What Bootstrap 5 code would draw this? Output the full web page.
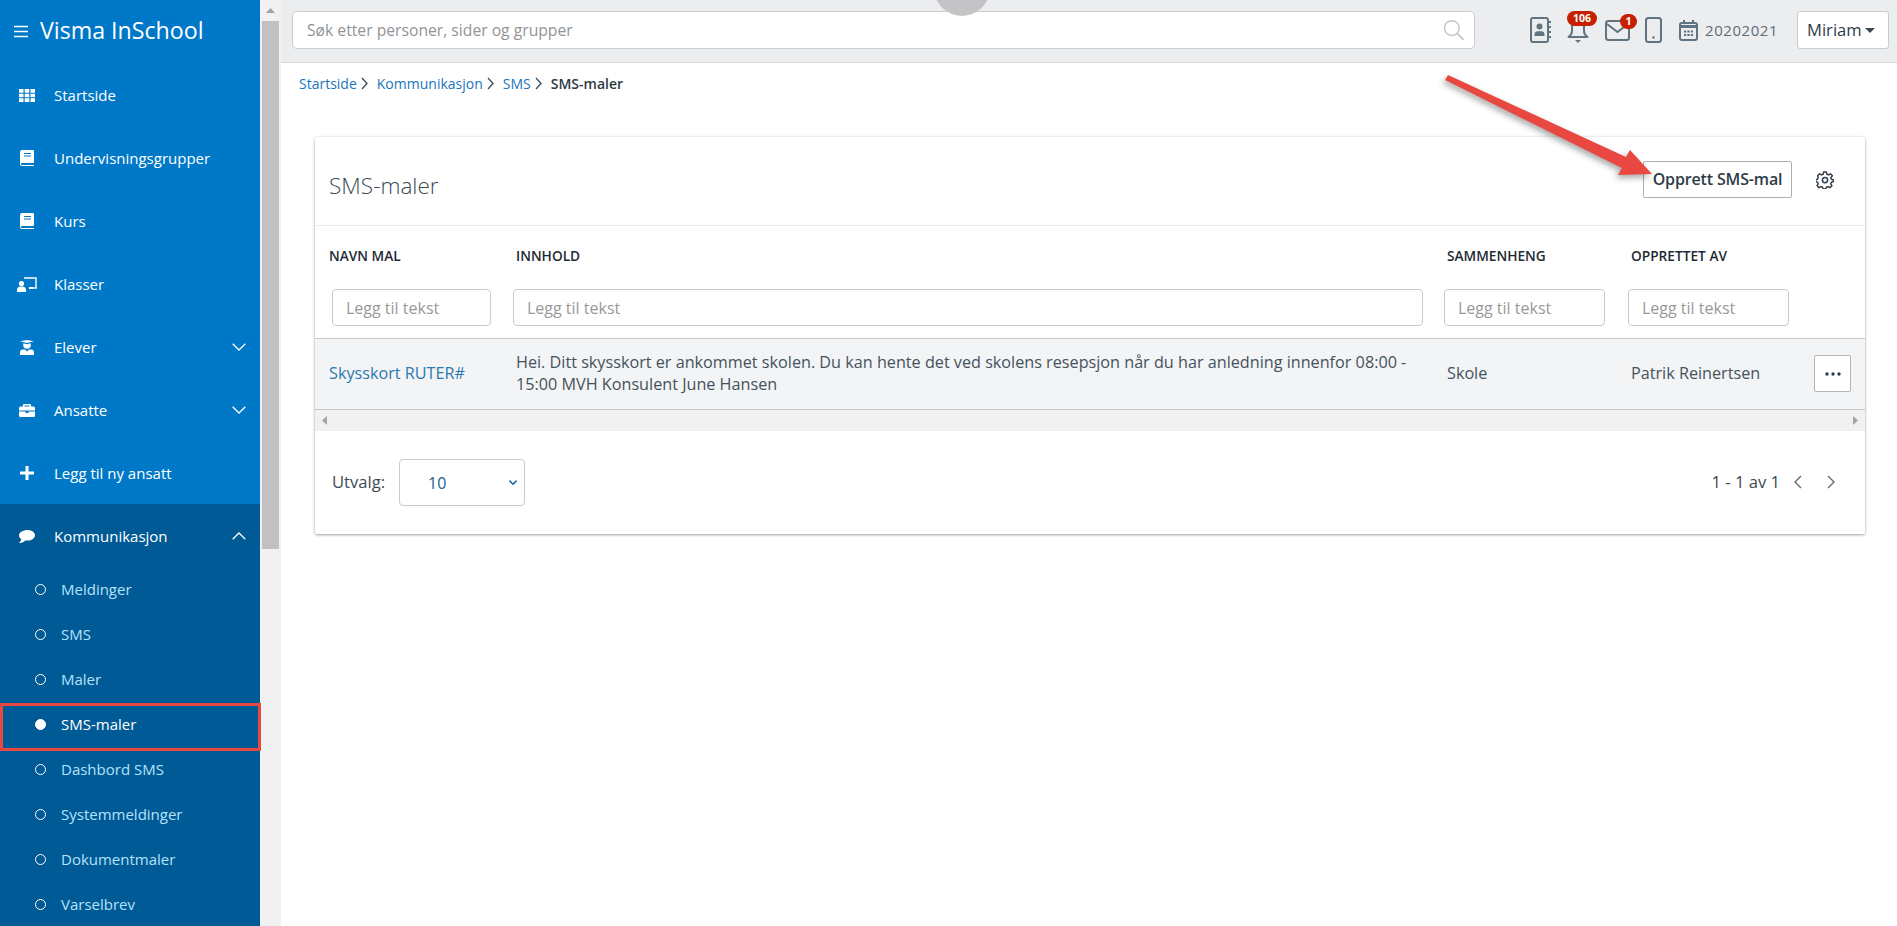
<!DOCTYPE html>
<html lang="nb">
<head>
<meta charset="utf-8">
<title>SMS-maler</title>
<link href="https://cdn.jsdelivr.net/npm/bootstrap@5.3.0/dist/css/bootstrap.min.css" rel="stylesheet">
<style>
html,body{height:926px;overflow:hidden;}
body{font-family:"Open Sans","Noto Sans",sans-serif;font-size:15px;color:#3c4a54;background:#fff;}
.shell{height:926px;position:relative;}
.side{width:260px;flex:none;background:#0078c8;color:#fff;position:relative;}
.brand{height:63px;padding-left:14px;gap:12px;font-size:23.2px;color:#fff;}
.brand span{position:relative;top:-1px;}
.mainlink{height:63px;color:#fff;padding:1px 14px 0 0;font-size:15px;}
.mainlink:hover,.sublink:hover{color:#fff;}
.ico{width:54px;flex:none;display:flex;justify-content:center;}
.openblock{background:#005a96;}
.sublink{height:45px;padding:0 0 0 35px;color:#b5e2fb;gap:15px;font-size:15px;position:relative;}
.dot{width:11px;height:11px;border:1.5px solid #fff;border-radius:50%;flex:none;}
.dot-on{background:#fff;}
.here{color:#fff;}
.redbox{position:absolute;left:0;top:1px;width:261px;height:48px;border:3px solid #e8483f;pointer-events:none;z-index:3;}
.vtrack{width:21px;flex:none;background:#f1f1f1;padding:0 2px;}
.vtrack-arrow{height:21px;padding-top:8px;}
.vthumb{height:528px;background:#c1c1c1;}
.topbar{height:63px;background:#ebedef;border-bottom:1px solid #d5d7d9;padding:0 8px 2px 11px;}
.searchwrap{width:1183px;height:38px;background:#fff;border:1px solid #c9cccf;border-radius:5px;padding:0 9px 0 14px;}
.searchtext{border:0;padding:0;height:100%;font-size:15.7px;box-shadow:none;background:transparent;}
.searchtext::placeholder{color:#8f9498;}
.toolicons{margin-left:55px;}
.tool{position:relative;display:block;line-height:0;}
.tool-bell{width:38px;}
.tool-mail{width:40px;}
.tool-phone{width:34px;}
.tool-cal{width:26px;}
.bubble{position:absolute;background:#c62000;color:#fff;font-size:10.5px;font-weight:700;line-height:15px;height:15px;border-radius:8px;padding:0;text-align:center;}
.bub-a{left:0;top:-6px;width:30px;}
.bub-b{left:15px;top:-6px;width:17px;}
.yeartext{color:#5d6e79;font-size:15px;letter-spacing:.55px;}
.userbtn{width:92px;height:38px;background:#fff;border:1px solid #c9cccf;border-radius:3px;color:#2f3c46;padding:0 0 0 9px;font-size:16.6px;font-weight:500;}
.caretmark{width:0;height:0;border-left:5px solid transparent;border-right:5px solid transparent;border-top:5px solid #3c4a54;margin-left:3px;}
.crumbs{padding:12px 0 0 18px;height:74px;margin:0;font-size:14px;}
.crumbs a{color:#1b75bb;text-decoration:none;}
.crumbitem{display:flex;align-items:center;height:17px;}
.sepsvg{margin:0 9px 0 4px;}
.strong{font-weight:600;color:#2d3a44;}
.panel{width:1550px;margin-left:34px;border:0;border-radius:2px;box-shadow:0 1px 3px rgba(0,0,0,.35),0 0 3px rgba(0,0,0,.07);overflow:hidden;}
.panel-head{height:89px;background:#fff;border-bottom:1px solid #ececec;padding:0 23px 0 14px;}
.paneltitle{font-size:22.6px;font-weight:300;color:#3c4a54;margin:0;position:relative;top:5px;}
.createbtn{width:149px;height:37px;background:#fff;border:1px solid #a9b0b5;border-radius:2px;color:#2e3c48;font-size:16px;font-weight:600;padding:0;margin-top:-4px;letter-spacing:-.15px;}
.gearbtn{margin-left:24px;margin-right:8px;line-height:0;margin-top:-2px;}
.grid{table-layout:fixed;width:1550px;margin:0;border-collapse:collapse;}
.grid th,.grid td{border:0;box-shadow:none;background:transparent;}
.col-a{width:187px;}
.col-b{width:931px;}
.col-c{width:184px;}
.col-d{width:64px;}
.heads th{height:63px;padding:0 14px 2px;font-size:13.7px;font-weight:600;color:#1e2a33;vertical-align:middle;}
.filters th{padding:0 12px 12px 11px;height:48px;vertical-align:top;}
.filters th.firstf{padding-left:17px;padding-right:11px;}
.filters th.secondf{padding-left:11px;padding-right:10px;}
.fbox{height:37px;font-size:16px;border:1px solid #c9cccf;border-radius:4px;padding:0 13px;color:#3c4a54;}
.fbox::placeholder{color:#999;}
.rowdata td{background:#f3f4f6;border-top:1px solid #c6c8ca;border-bottom:1px solid #c6c8ca;height:71px;padding:0 14px 1px;vertical-align:middle;color:#44525c;line-height:21.5px;font-size:16.2px;}
.rowdata a{color:#2a7ab0;text-decoration:none;}
.morebtn{width:37px;height:37px;background:#fff;border:1px solid #b0b5b9;border-radius:2px;padding:0;line-height:0;display:flex;align-items:center;justify-content:center;margin-left:-1px;}
.hscroll{height:21px;background:#f1f1f1;padding:0 7px;}
.panelfoot{height:103px;padding:0 29px 0 17px;background:#fff;}
.utv{font-weight:500;color:#3c4a54;font-size:16.6px;}
.sizepick{width:126px;height:47px;margin-left:14px;border:1px solid #c9cccf;border-radius:4px;color:#1a5f92;padding:0 0 0 28px;font-size:16px;background-position:right 4px center;background-size:14px 10px;background-image:url("data:image/svg+xml,%3csvg xmlns='http://www.w3.org/2000/svg' viewBox='0 0 16 16'%3e%3cpath fill='none' stroke='%231a6ea8' stroke-linecap='round' stroke-linejoin='round' stroke-width='2.6' d='m3 5 5 5 5-5'/%3e%3c/svg%3e");}
.pager{color:#3c4a54;font-size:16.6px;font-weight:500;}
.pg-prev{margin-left:13px;}
.pg-next{margin-left:25px;}
.arrowlayer{position:absolute;left:1430px;top:60px;z-index:5;pointer-events:none;overflow:visible;filter:drop-shadow(-2px 3px 3px rgba(0,0,0,.35));}
.busy{position:absolute;left:934px;top:-40px;width:56px;height:56px;border-radius:50%;background:#c4c4c6;z-index:4;}
</style>
</head>
<body>
<div class="shell d-flex">
  <aside class="side">
    <div class="brand d-flex align-items-center">
      <svg width="14" height="13" viewBox="0 0 14 13"><path d="M0 1.5h14M0 6.5h14M0 11.5h14" stroke="#fff" stroke-width="1.5"/></svg>
      <span>Visma InSchool</span>
    </div>
    <ul class="nav flex-column">
      <li class="nav-item"><a class="nav-link mainlink d-flex align-items-center" href="#"><span class="ico"><svg width="16" height="13" viewBox="0 0 16 13" fill="#fff"><path d="M0 0h4.5v3.7H0zM5.7 0h4.6v3.7H5.7zM11.5 0H16v3.7h-4.5zM0 4.7h4.5v3.6H0zM5.7 4.7h4.6v3.6H5.7zM11.5 4.7H16v3.6h-4.5zM0 9.3h4.5V13H0zM5.7 9.3h4.6V13H5.7zM11.5 9.3H16V13h-4.5z"/></svg></span>Startside</a></li>
      <li class="nav-item"><a class="nav-link mainlink d-flex align-items-center" href="#"><span class="ico"><svg width="14" height="16" viewBox="0 0 14 16"><path fill="#fff" d="M2 0h11a1 1 0 0 1 1 1v11a1 1 0 0 1-1 1H2.2C1.4 13 1 13.4 1 14s.4 1 1.2 1H14v1H2a2 2 0 0 1-2-2V2a2 2 0 0 1 2-2z"/><path d="M4 3.5h7M4 6h7" stroke="#0078c8" stroke-width="1.2"/></svg></span>Undervisningsgrupper</a></li>
      <li class="nav-item"><a class="nav-link mainlink d-flex align-items-center" href="#"><span class="ico"><svg width="14" height="16" viewBox="0 0 14 16"><path fill="#fff" d="M2 0h11a1 1 0 0 1 1 1v11a1 1 0 0 1-1 1H2.2C1.4 13 1 13.4 1 14s.4 1 1.2 1H14v1H2a2 2 0 0 1-2-2V2a2 2 0 0 1 2-2z"/><path d="M4 3.5h7M4 6h7" stroke="#0078c8" stroke-width="1.2"/></svg></span>Kurs</a></li>
      <li class="nav-item"><a class="nav-link mainlink d-flex align-items-center" href="#"><span class="ico"><svg width="20" height="15" viewBox="0 0 20 15"><path d="M7 1h12v10h-7" fill="none" stroke="#fff" stroke-width="1.4"/><path d="M12 11h4" stroke="#fff" stroke-width="2"/><circle cx="4.5" cy="6.5" r="2.6" fill="#fff"/><path d="M0 15v-2c0-2 1.600-3.400 3.400-3.400h2.200c1.800 0 3.400 1.400 3.400 3.400v2z" fill="#fff"/></svg></span>Klasser</a></li>
      <li class="nav-item"><a class="nav-link mainlink d-flex align-items-center" href="#"><span class="ico"><svg width="14" height="15" viewBox="0 0 14 15" fill="#fff"><path d="M0 1.200 7 0l7 1.200-7 1.800z"/><path d="M3.200 3.200 7 4.200l3.800-1V5a3.800 3.800 0 0 1-7.600 0z"/><path d="M0 15v-2.800C0 10.600 1.200 9.600 2.700 9.600H5L7 11.500l2-1.900h2.300c1.500 0 2.700 1 2.700 2.600V15z"/></svg></span><span class="flex-grow-1">Elever</span><svg width="14" height="8" viewBox="0 0 14 8"><path d="M.7.7 7 7 13.300.7" fill="none" stroke="#fff" stroke-width="1.300"/></svg></a></li>
      <li class="nav-item"><a class="nav-link mainlink d-flex align-items-center" href="#"><span class="ico"><svg width="16" height="13" viewBox="0 0 16 13" fill="#fff"><path fill-rule="evenodd" d="M5 0h6a1 1 0 0 1 1 1v1.500h2.500A1.500 1.500 0 0 1 16 4v2.500H0V4a1.500 1.500 0 0 1 1.500-1.500H4V1a1 1 0 0 1 1-1zm.5 1.500v1h5v-1z"/><path d="M0 7.500h6.500v1.500h3V7.500H16v4A1.500 1.500 0 0 1 14.500 13h-13A1.500 1.500 0 0 1 0 11.500z"/></svg></span><span class="flex-grow-1">Ansatte</span><svg width="14" height="8" viewBox="0 0 14 8"><path d="M.7.7 7 7 13.300.7" fill="none" stroke="#fff" stroke-width="1.300"/></svg></a></li>
      <li class="nav-item"><a class="nav-link mainlink d-flex align-items-center" href="#"><span class="ico"><svg width="14" height="14" viewBox="0 0 14 14"><path d="M7 0v14M0 7h14" stroke="#fff" stroke-width="3"/></svg></span>Legg til ny ansatt</a></li>
      <li class="nav-item openblock">
        <a class="nav-link mainlink d-flex align-items-center" href="#"><span class="ico"><svg width="16" height="13" viewBox="0 0 16 13"><path fill="#fff" d="M8.500 0C12.600 0 16 2.300 16 5.300c0 3-3.400 5.300-7.500 5.300-.8 0-1.500-.1-2.200-.2C5 11.800 2.800 13 0 13c1.200-1 2-2.200 2.400-3.700C1 8.300 0 6.900 0 5.300 0 2.300 4.400 0 8.500 0z"/></svg></span><span class="flex-grow-1">Kommunikasjon</span><svg width="14" height="8" viewBox="0 0 14 8"><path d="M.7 7.300 7 1l6.300 6.300" fill="none" stroke="#fff" stroke-width="1.300"/></svg></a>
        <ul class="nav flex-column">
          <li class="nav-item w-100"><a class="nav-link sublink d-flex align-items-center" href="#"><span class="dot"></span>Meldinger</a></li>
          <li class="nav-item w-100"><a class="nav-link sublink d-flex align-items-center" href="#"><span class="dot"></span>SMS</a></li>
          <li class="nav-item w-100"><a class="nav-link sublink d-flex align-items-center" href="#"><span class="dot"></span>Maler</a></li>
          <li class="nav-item w-100"><a class="nav-link sublink here d-flex align-items-center" href="#"><span class="dot dot-on"></span>SMS-maler<span class="redbox"></span></a></li>
          <li class="nav-item w-100"><a class="nav-link sublink d-flex align-items-center" href="#"><span class="dot"></span>Dashbord SMS</a></li>
          <li class="nav-item w-100"><a class="nav-link sublink d-flex align-items-center" href="#"><span class="dot"></span>Systemmeldinger</a></li>
          <li class="nav-item w-100"><a class="nav-link sublink d-flex align-items-center" href="#"><span class="dot"></span>Dokumentmaler</a></li>
          <li class="nav-item w-100"><a class="nav-link sublink d-flex align-items-center" href="#"><span class="dot"></span>Varselbrev</a></li>
        </ul>
      </li>
    </ul>
  </aside>

  <div class="vtrack">
    <div class="vtrack-arrow d-flex justify-content-center align-items-start"><svg width="9" height="5" viewBox="0 0 9 5"><path d="M4.500 0 9 5H0z" fill="#a3a3a3"/></svg></div>
    <div class="vthumb"></div>
  </div>

  <div class="flex-grow-1 d-flex flex-column">
    <header class="topbar d-flex align-items-center">
      <div class="searchwrap d-flex align-items-center">
        <input class="form-control searchtext flex-grow-1" placeholder="Søk etter personer, sider og grupper">
        <svg width="22" height="22" viewBox="0 0 22 22"><circle cx="9" cy="9" r="7.500" fill="none" stroke="#c3c6c9" stroke-width="1.500"/><path d="m14.500 14.500 6.500 6.500" stroke="#c3c6c9" stroke-width="1.800"/></svg>
      </div>
      <div class="toolicons d-flex align-items-center">
        <span class="tool me-3"><svg width="21" height="26" viewBox="0 0 21 26"><rect x="1" y="1" width="17" height="24" rx="2" fill="none" stroke="#5f7380" stroke-width="2"/><path d="M18 5h3M18 10h3M18 15h3M18 20h3" stroke="#5f7380" stroke-width="2"/><circle cx="9.500" cy="9.500" r="3" fill="#5f7380"/><path d="M4.500 19v-1.500c0-2 1.600-3.200 3.200-3.200h3.600c1.600 0 3.200 1.200 3.200 3.200V19z" fill="#5f7380"/></svg></span>
        <span class="tool tool-bell"><svg width="22" height="27" viewBox="0 0 22 27"><path d="M11 3C6.500 3 5 6.500 5 10v4c0 2.500-1.500 4.500-3.500 6h19C18.500 18.500 17 16.500 17 14v-4c0-3.500-1.500-7-6-7z" fill="none" stroke="#5f7380" stroke-width="2" stroke-linejoin="round"/><path d="M8 23h6l-3 3z" fill="#5f7380"/></svg><span class="bubble bub-a">106</span></span>
        <span class="tool tool-mail"><svg width="25" height="21" viewBox="0 0 25 21"><rect x="1" y="1" width="23" height="19" rx="2.500" fill="none" stroke="#5f7380" stroke-width="2"/><path d="m2 4 10.500 8L23 4" fill="none" stroke="#5f7380" stroke-width="2"/></svg><span class="bubble bub-b">1</span></span>
        <span class="tool tool-phone"><svg width="17" height="26" viewBox="0 0 17 26"><rect x="1" y="1" width="15" height="24" rx="2.500" fill="none" stroke="#5f7380" stroke-width="2"/><circle cx="8.500" cy="20.500" r="1.200" fill="#5f7380"/></svg></span>
        <span class="tool tool-cal"><svg width="19" height="21" viewBox="0 0 19 21"><rect x="1" y="3" width="17" height="17" rx="2" fill="none" stroke="#5f7380" stroke-width="2"/><path d="M1 5h17v3H1z" fill="#5f7380"/><path d="M5 0v4M14 0v4" stroke="#5f7380" stroke-width="2"/><path d="M5 10.500h2.200v2H5zM8.400 10.500h2.200v2H8.400zM11.800 10.500H14v2h-2.200zM5 14h2.200v2H5zM8.400 14h2.200v2H8.400zM11.800 14H14v2h-2.200z" fill="#5f7380"/></svg></span>
        <span class="yeartext">20202021</span>
      </div>
      <button class="btn userbtn d-flex align-items-center ms-auto" type="button">Miriam<span class="caretmark"></span></button>
    </header>

    <nav aria-label="breadcrumb">
      <div class="crumbs d-flex align-items-start">
        <span class="crumbitem"><a href="#">Startside</a><svg class="sepsvg" width="7" height="13" viewBox="0 0 7 13"><path d="m1 1 5 5.500L1 12" fill="none" stroke="#3c4a54" stroke-width="1.300"/></svg></span>
        <span class="crumbitem"><a href="#">Kommunikasjon</a><svg class="sepsvg" width="7" height="13" viewBox="0 0 7 13"><path d="m1 1 5 5.500L1 12" fill="none" stroke="#3c4a54" stroke-width="1.300"/></svg></span>
        <span class="crumbitem"><a href="#">SMS</a><svg class="sepsvg" width="7" height="13" viewBox="0 0 7 13"><path d="m1 1 5 5.500L1 12" fill="none" stroke="#3c4a54" stroke-width="1.300"/></svg></span>
        <span class="crumbitem strong">SMS-maler</span>
      </div>
    </nav>

    <section class="card panel">
      <div class="panel-head d-flex align-items-center justify-content-between">
        <h1 class="paneltitle">SMS-maler</h1>
        <div class="d-flex align-items-center">
          <button class="btn createbtn" type="button">Opprett SMS-mal</button>
          <span class="gearbtn"><svg width="18" height="18" viewBox="0 0 24 24"><path fill="none" stroke="#2f3c46" stroke-width="2" stroke-linejoin="round" d="M10 2h4l.6 3 2.300 1 2.600-1.600 2.800 2.800L20 9.800l1 2.200 2.500.6v2.800l-2.500.6-1 2.300 1.600 2.600-2.800 2.800-2.600-1.600-2.300 1-.6 2.500h-4l-.6-2.500-2.300-1-2.600 1.600-2.800-2.800 1.600-2.600-1-2.300-2.500-.6v-2.800l2.500-.6 1-2.300L1.800 7.200l2.800-2.800 2.600 1.600 2.300-1z" transform="scale(.96) translate(.5 -.5)"/><circle cx="12" cy="12" r="3.500" fill="none" stroke="#2f3c46" stroke-width="2"/></svg></span>
        </div>
      </div>
      <table class="table grid">
        <colgroup><col class="col-a"><col class="col-b"><col class="col-c"><col class="col-c"><col class="col-d"></colgroup>
        <thead>
          <tr class="heads"><th>NAVN MAL</th><th>INNHOLD</th><th>SAMMENHENG</th><th>OPPRETTET AV</th><th></th></tr>
          <tr class="filters">
            <th class="firstf"><input class="form-control fbox" placeholder="Legg til tekst"></th>
            <th class="secondf"><input class="form-control fbox" placeholder="Legg til tekst"></th>
            <th><input class="form-control fbox" placeholder="Legg til tekst"></th>
            <th><input class="form-control fbox" placeholder="Legg til tekst"></th>
            <th></th>
          </tr>
        </thead>
        <tbody>
          <tr class="rowdata">
            <td><a href="#">Skysskort RUTER#</a></td>
            <td>Hei. Ditt skysskort er ankommet skolen. Du kan hente det ved skolens resepsjon når du har anledning innenfor 08:00 -<br>15:00 MVH Konsulent June Hansen</td>
            <td>Skole</td>
            <td>Patrik Reinertsen</td>
            <td><button class="btn morebtn" type="button"><svg width="16" height="4" viewBox="0 0 16 4" fill="#2f3c46"><circle cx="2" cy="2" r="1.700"/><circle cx="8" cy="2" r="1.700"/><circle cx="14" cy="2" r="1.700"/></svg></button></td>
          </tr>
        </tbody>
      </table>
      <div class="hscroll d-flex align-items-center justify-content-between">
        <svg width="5" height="9" viewBox="0 0 5 9"><path d="M5 0v9L0 4.500z" fill="#a3a3a3"/></svg>
        <svg width="5" height="9" viewBox="0 0 5 9"><path d="M0 0v9l5-4.500z" fill="#a3a3a3"/></svg>
      </div>
      <div class="panelfoot d-flex align-items-center justify-content-between">
        <div class="d-flex align-items-center">
          <span class="utv">Utvalg:</span>
          <select class="form-select sizepick"><option>10</option></select>
        </div>
        <div class="pager d-flex align-items-center">
          <span>1 - 1 av 1</span>
          <svg class="pg-prev" width="9" height="14" viewBox="0 0 9 14"><path d="M8 1 2 7l6 6" fill="none" stroke="#5f6b74" stroke-width="1.400"/></svg>
          <svg class="pg-next" width="9" height="14" viewBox="0 0 9 14"><path d="m1 1 6 6-6 6" fill="none" stroke="#5f6b74" stroke-width="1.400"/></svg>
        </div>
      </div>
    </section>
  </div>

  <div class="busy"></div>
  <svg class="arrowlayer" width="240" height="130" viewBox="0 0 240 130">
    <path d="M18 15 196 97 200 90 222 114 188 115 192 108 15 20z" fill="#e8483f"/>
  </svg>
</div>
<script src="https://cdn.jsdelivr.net/npm/bootstrap@5.3.0/dist/js/bootstrap.bundle.min.js"></script>
</body>
</html>
